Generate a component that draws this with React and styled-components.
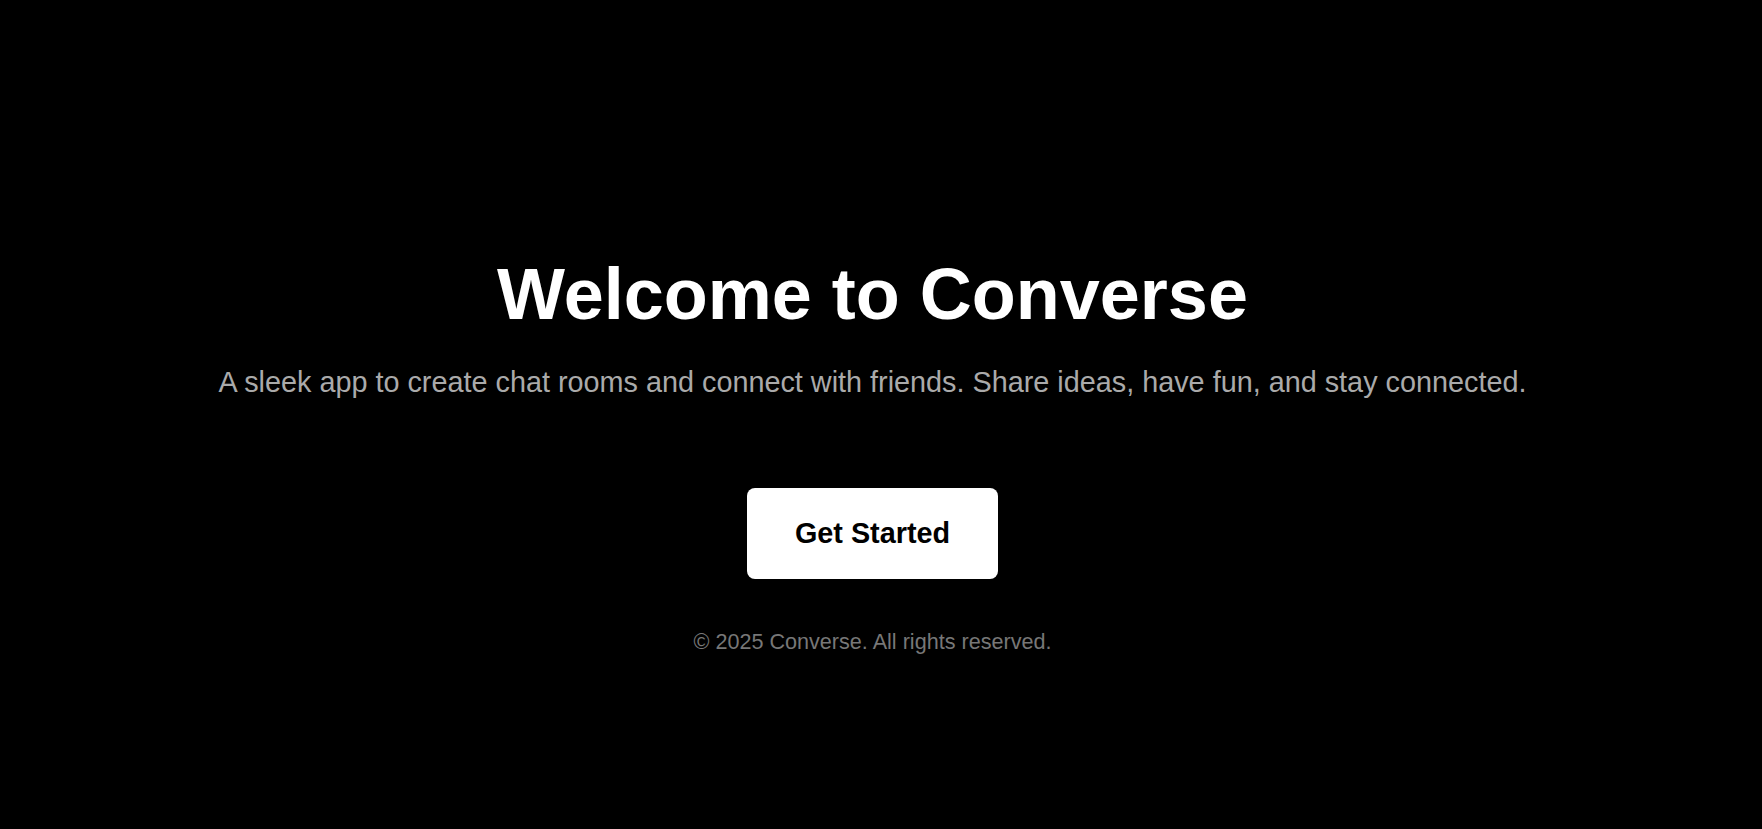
import * as React from "react"
import styled, { createGlobalStyle } from "styled-components"

const GlobalStyle = createGlobalStyle`
  html, body {
    margin: 0;
    padding: 0;
    background: #000;
  }
  body {
    font-family: "Liberation Sans", Arial, sans-serif;
  }
`

// right padding keeps the column centred as in the original, which had a scrollbar gutter
const Page = styled.main`
  min-height: 100vh;
  box-sizing: border-box;
  padding: 253px 17px 0 0;
  display: flex;
  flex-direction: column;
  align-items: center;
  background: #000;
  color: #fff;
  text-align: center;
`

const Title = styled.h1`
  margin: 0;
  font-size: 72px;
  line-height: 1.15;
  font-weight: 700;
  color: #fff;
`

const Tagline = styled.p`
  margin: 30px 0 0;
  font-size: 28.8px;
  line-height: 1.15;
  color: #aaaaaa;
`

const StartButton = styled.button`
  margin-top: 89px;
  padding: 29px 48px;
  border: none;
  border-radius: 8px;
  background: #fff;
  color: #000;
  font-family: inherit;
  font-size: 28.8px;
  line-height: 1.15;
  font-weight: 700;
  cursor: pointer;
`

const Footer = styled.footer`
  margin-top: 51px;
  font-size: 21.6px;
  line-height: 1.15;
  color: #777777;
`

export default function App() {
  return (
    <>
      <GlobalStyle />
      <Page>
        <Title>Welcome to Converse</Title>
        <Tagline>
          A sleek app to create chat rooms and connect with friends. Share ideas, have fun, and stay connected.
        </Tagline>
        <StartButton>Get Started</StartButton>
        <Footer>© 2025 Converse. All rights reserved.</Footer>
      </Page>
    </>
  )
}
